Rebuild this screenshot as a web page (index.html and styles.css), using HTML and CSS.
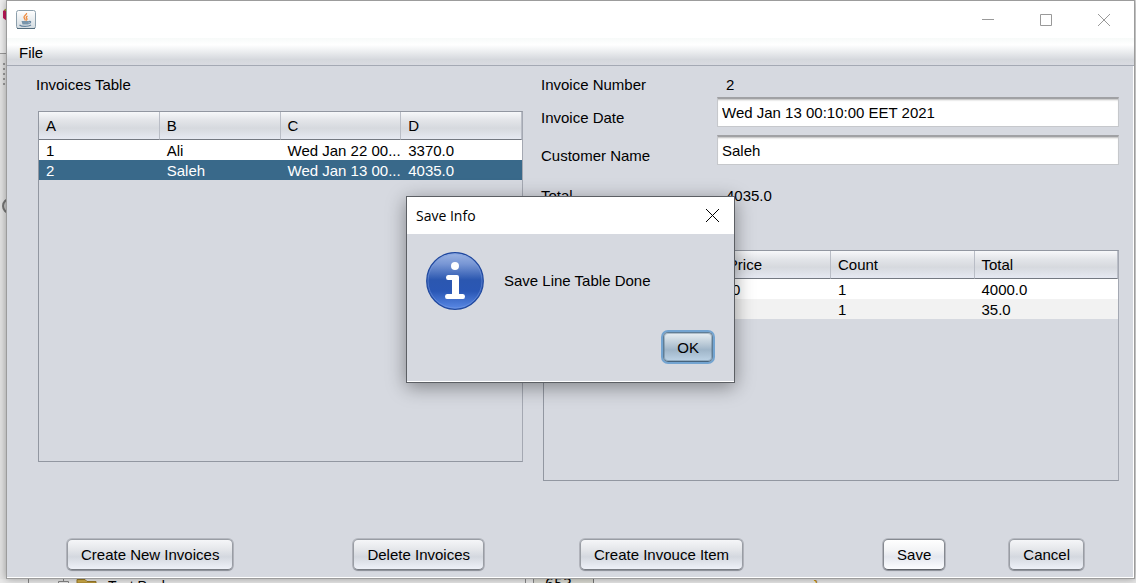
FILE: index.html
```html
<!DOCTYPE html>
<html lang="en">
<head>
<meta charset="utf-8">
<title>Invoices</title>
<link rel="stylesheet" href="styles.css">
</head>
<body>
<svg class="backdrop-edge" width="7" height="230" viewBox="0 0 7 230" aria-hidden="true">
  <rect width="7" height="53" fill="#f0f0f0"/>
  <path d="M7 8L3 11v7l4 3z" fill="#c2185b"/><path d="M7 8L4 10l3 2z" fill="#9bbf2e"/>
  <rect x="6" y="36" width="1" height="11" fill="#b98a5a"/>
  <rect y="53" width="7" height="1" fill="#999"/>
  <g fill="#9a9a9a"><rect x="3" y="63" width="2" height="2"/><rect x="3" y="68" width="2" height="2"/><rect x="3" y="73" width="2" height="2"/><rect x="3" y="78" width="2" height="2"/><rect x="3" y="83" width="2" height="2"/></g>
  <circle cx="10" cy="206" r="7" fill="#ccc" stroke="#777" stroke-width="2"/>
</svg>
<main class="window">
  <header class="titlebar">
    <svg width="20" height="20" viewBox="0 0 20 20" aria-hidden="true">
      <defs><linearGradient id="cup" x1="0" y1="0" x2="0" y2="1"><stop offset="0" stop-color="#fff"/><stop offset="1" stop-color="#d3dbe0"/></linearGradient></defs>
      <rect x=".5" y=".5" width="19" height="18" rx="2" fill="url(#cup)" stroke="#8c9fac"/>
      <path d="M1 18.5h18" stroke="#526b7c"/>
      <path d="M10.5 3c1 1.500-3 2.500-2.500 4.500 .2 1 1.500 1.500 1 3M11.500 6c-1.500 .8-1.500 1.600-.7 2.500 .5 .7 0 1.500-.6 2" fill="none" stroke="#ef8a3c" stroke-width="1.300"/>
      <path d="M5.500 11h7.500l-.5 3.500h-6z" fill="#7895ab"/>
      <path d="M13 11.500c2.500-.8 2 2-.5 2M3.500 15c2 1.800 9 1.800 11.500 0" fill="none" stroke="#6685a0" stroke-width="1.200"/>
    </svg>
    <div class="window-controls">
      <button class="control" aria-label="Minimize"><svg width="12" height="12" viewBox="0 0 12 12"><path d="M0 5.500h12"/></svg></button>
      <button class="control" aria-label="Maximize"><svg width="12" height="12" viewBox="0 0 12 12"><path d="M.5.5h11v11H.5z"/></svg></button>
      <button class="control" aria-label="Close"><svg width="12" height="12" viewBox="0 0 12 12"><path d="M0 0l12 12M12 0L0 12"/></svg></button>
    </div>
  </header>
  <nav class="menubar"><button class="menu">File</button></nav>

  <div class="content">
    <section class="pane invoices">
      <h2 class="heading">Invoices Table</h2>
      <div class="table-box">
        <table>
          <thead><tr><th>A</th><th>B</th><th>C</th><th>D</th></tr></thead>
          <tbody>
            <tr><td>1</td><td>Ali</td><td>Wed Jan 22 00...</td><td>3370.0</td></tr>
            <tr class="selected"><td>2</td><td>Saleh</td><td>Wed Jan 13 00...</td><td>4035.0</td></tr>
          </tbody>
        </table>
      </div>
    </section>
    <section class="pane details">
      <div class="form">
        <span>Invoice Number</span><output class="value">2</output>
        <label class="field-label" for="date">Invoice Date</label><input id="date" type="text" value="Wed Jan 13 00:10:00 EET 2021">
        <label class="field-label" for="customer">Customer Name</label><input id="customer" type="text" value="Saleh">
        <span class="total">Total</span><output class="value total">4035.0</output>
      </div>
      <div class="table-box">
        <table>
          <thead><tr><th></th><th>Item Price</th><th>Count</th><th>Total</th></tr></thead>
          <tbody>
            <tr><td></td><td>4000.0</td><td>1</td><td>4000.0</td></tr>
            <tr class="alternate"><td></td><td>35.0</td><td>1</td><td>35.0</td></tr>
          </tbody>
        </table>
      </div>
    </section>
  </div>

  <footer class="actions">
    <div class="group invoice-actions">
      <button class="button">Create New Invoices</button>
      <button class="button">Delete Invoices</button>
    </div>
    <div class="group item-actions">
      <button class="button">Create Invouce Item</button>
      <div class="pair">
        <button class="button hover">Save</button>
        <button class="button">Cancel</button>
      </div>
    </div>
  </footer>

  <div class="dialog" role="dialog" aria-labelledby="dialog-title">
    <header class="dialog-title">
      <h2 id="dialog-title">Save Info</h2>
      <button class="dialog-close" aria-label="Close"><svg width="13" height="13" viewBox="0 0 13 13"><path d="M0 0l13 13M13 0L0 13"/></svg></button>
    </header>
    <div class="dialog-message">
      <svg width="58" height="58" viewBox="0 0 58 58" aria-hidden="true">
        <defs><linearGradient id="info" x1="0" y1="0" x2="0" y2="1"><stop offset="0" stop-color="#9db5e4"/><stop offset=".2" stop-color="#7896d4"/><stop offset=".48" stop-color="#2b57b0"/><stop offset=".68" stop-color="#2a57b5"/><stop offset="1" stop-color="#5b8ae6"/></linearGradient></defs>
        <circle cx="29" cy="29" r="28.300" fill="url(#info)" stroke="#21499f" stroke-width="1.200"/>
        <circle cx="29" cy="29" r="27" fill="none" stroke="#7a9ce0" stroke-opacity=".5"/>
        <circle cx="29" cy="14" r="4" fill="#fff"/>
        <path d="M22 23h9q2 0 2 2v17h4q2 0 2 2.500t-2 2.500H21q-2 0-2-2.500t2-2.500h5V28h-4q-2 0-2-2.500t2-2.500z" fill="#fff"/>
      </svg>
      <p>Save Line Table Done</p>
    </div>
    <div class="dialog-actions"><button class="button focused">OK</button></div>
  </div>
</main>
<div class="backdrop-strip">
  <svg width="100" height="4" viewBox="0 0 100 4" aria-hidden="true">
    <path d="M28.500 0v4" stroke="#888"/><path d="M58.500 4V2.500h10V4M63.500 0v2" fill="none" stroke="#888"/>
    <path d="M77 4V.5h8l2 2h9V4z" fill="#d1ad49" stroke="#9a7b28"/>
  </svg>
  <span class="tree-text">Test Pack</span>
  <span class="line-number">653</span>
  <span class="code">}</span>
</div>
</body>
</html>
```
FILE: styles.css
```css
* { box-sizing: border-box; }
body {
  margin: 0;
  height: 100vh;
  position: relative;
  display: flex;
  flex-direction: column;
  overflow: hidden;
  background: #e3e3e3;
  color: #000;
  font: 15px/20px "Liberation Sans", Arial, sans-serif;
}
button, input { font: inherit; color: inherit; }
h2, p { margin: 0; font-size: inherit; font-weight: normal; }
.backdrop-edge { position: absolute; left: 0; top: 0; }
.window {
  position: relative;
  flex: 1;
  min-height: 0;
  margin: 0 1px 0 6px;
  display: flex;
  flex-direction: column;
  background: #d6d9e0;
  border: 1px solid #9c9c9c;
  box-shadow: inset 0 -1px #fff, inset -1px 0 #fff, 0 0 8px rgba(0, 0, 0, .35);
}
.titlebar {
  display: flex;
  justify-content: space-between;
  align-items: center;
  height: 37px;
  padding: 0 1px 0 9px;
  background: #fff;
}
.window-controls { display: flex; }
.control {
  width: 58px;
  height: 34px;
  display: grid;
  place-items: center;
  padding: 0;
  border: 0;
  background: none;
}
.control path { fill: none; stroke: #999; }
.menubar {
  display: flex;
  align-items: center;
  height: 28px;
  padding: 2px 12px 0;
  border-bottom: 1px solid #a4a9b4;
  background: linear-gradient(#f7faf9, #fff 25%, #eceef0 50%, #d5d8dd 80%, #d9dbe1);
}
.menu { padding: 0; border: 0; background: none; }
.content {
  flex: 1;
  min-height: 0;
  display: grid;
  grid-template-columns: 487fr 578fr;
  gap: 18px;
  padding: 9px 15px 0 29px;
}
.pane { display: flex; flex-direction: column; min-width: 0; }
.table-box { flex: 1; margin-left: 2px; border: 1px solid #9297a1; border-right-color: #a4a8b2; }
.invoices .table-box { margin-top: 16px; margin-bottom: 19px; }
.details .table-box { margin-top: 44px; }
table { width: 100%; table-layout: fixed; border-collapse: separate; border-spacing: 0; background: #fff; }
th, td { padding: 0 0 0 7px; text-align: left; font-weight: normal; white-space: nowrap; overflow: hidden; }
th {
  height: 28px;
  border-right: 1px solid #b9bdc6;
  border-bottom: 1px solid #747982;
  background: linear-gradient(#f7f8fa, #e3e5e9 30%, #d6d9de 60%, #e6e9f2);
}
td { height: 20px; padding-top: 2px; line-height: 18px; }
.selected { background: #39698a; color: #fff; }
.alternate { background: #f2f2f2; }
.form {
  display: grid;
  grid-template-columns: 176px 1fr;
  grid-template-rows: 14px 30px 30px 33px;
  row-gap: 8px;
}
.value { padding-left: 9px; }
.field-label { padding-top: 11px; }
.total { padding-top: 13px; }
.form input {
  width: 100%;
  height: 30px;
  padding: 0 4px;
  border: 1px solid #c6c8cc;
  border-top: 2px solid #a0a1a4;
  background: #fff;
  box-shadow: inset 0 2px 2px -1px #bbb;
}
.actions {
  display: grid;
  grid-template-columns: 487fr 578fr;
  gap: 18px;
  padding: 58px 15px 8px 29px;
}
.group { display: flex; justify-content: space-between; }
.invoice-actions { padding: 0 39px 0 31px; }
.item-actions { padding: 0 35px 0 39px; }
.pair { display: flex; gap: 64px; }
.button {
  height: 31px;
  padding: 1px 13px 0;
  border: 1px solid #999da4;
  border-bottom-color: #7a7e85;
  border-radius: 5px;
  background: linear-gradient(#f5f6f8, #e3e5e9 35%, #d4d8df 58%, #eef1f8);
  box-shadow: 0 0 0 1px rgba(120, 124, 132, .35), 0 1px 1px rgba(90, 94, 102, .5);
}
.hover { border-color: #858990; border-bottom-color: #5f6268; background: linear-gradient(#fff, #f3f4f6 35%, #e4e7ee 58%, #fcfdff); }
.focused {
  height: 30px;
  border-color: #5f7d96;
  border-bottom-color: #46637c;
  background: linear-gradient(#e9eff3, #b9c9d6 40%, #9fb5c8 60%, #bdd3e6);
  box-shadow: inset 0 0 0 1px rgba(70, 99, 124, .35), 0 0 0 2px #73a4d1;
}
.dialog {
  position: absolute;
  inset: 0;
  margin: auto;
  width: 329px;
  height: fit-content;
  padding-bottom: 20px;
  border: 1px solid #5c5f64;
  background: #d6d9e0;
  box-shadow: inset 0 -1px #fff, 0 4px 18px rgba(0, 0, 0, .4);
}
.dialog-title {
  display: flex;
  align-items: center;
  justify-content: space-between;
  height: 37px;
  padding: 0 15px 0 9px;
  background: #fff;
  font: 14px/20px "Open Sans", "Noto Sans", sans-serif;
}
.dialog-close { display: grid; padding: 0; border: 0; background: none; }
.dialog-close path { stroke: #000; }
.dialog-message { display: flex; align-items: center; gap: 20px; padding: 18px 19px 0; }
.dialog-actions { display: flex; justify-content: flex-end; padding: 22px 21px 0; }
.backdrop-strip {
  display: flex;
  height: 4px;
  overflow: hidden;
  background: #e9e9e9;
  line-height: 14px;
}
.tree-text { margin-left: 8px; width: 418px; border-right: 1px solid #888; white-space: nowrap; font-size: 14px; }
.line-number { width: 61px; padding-left: 11px; margin-left: 7px; border-left: 1px solid #888; border-right: 1px solid #777; background: #dcdcd4; font: 15px/13px "DejaVu Sans Mono", monospace; }
.code { padding-left: 220px; color: #b8860b; }
```
